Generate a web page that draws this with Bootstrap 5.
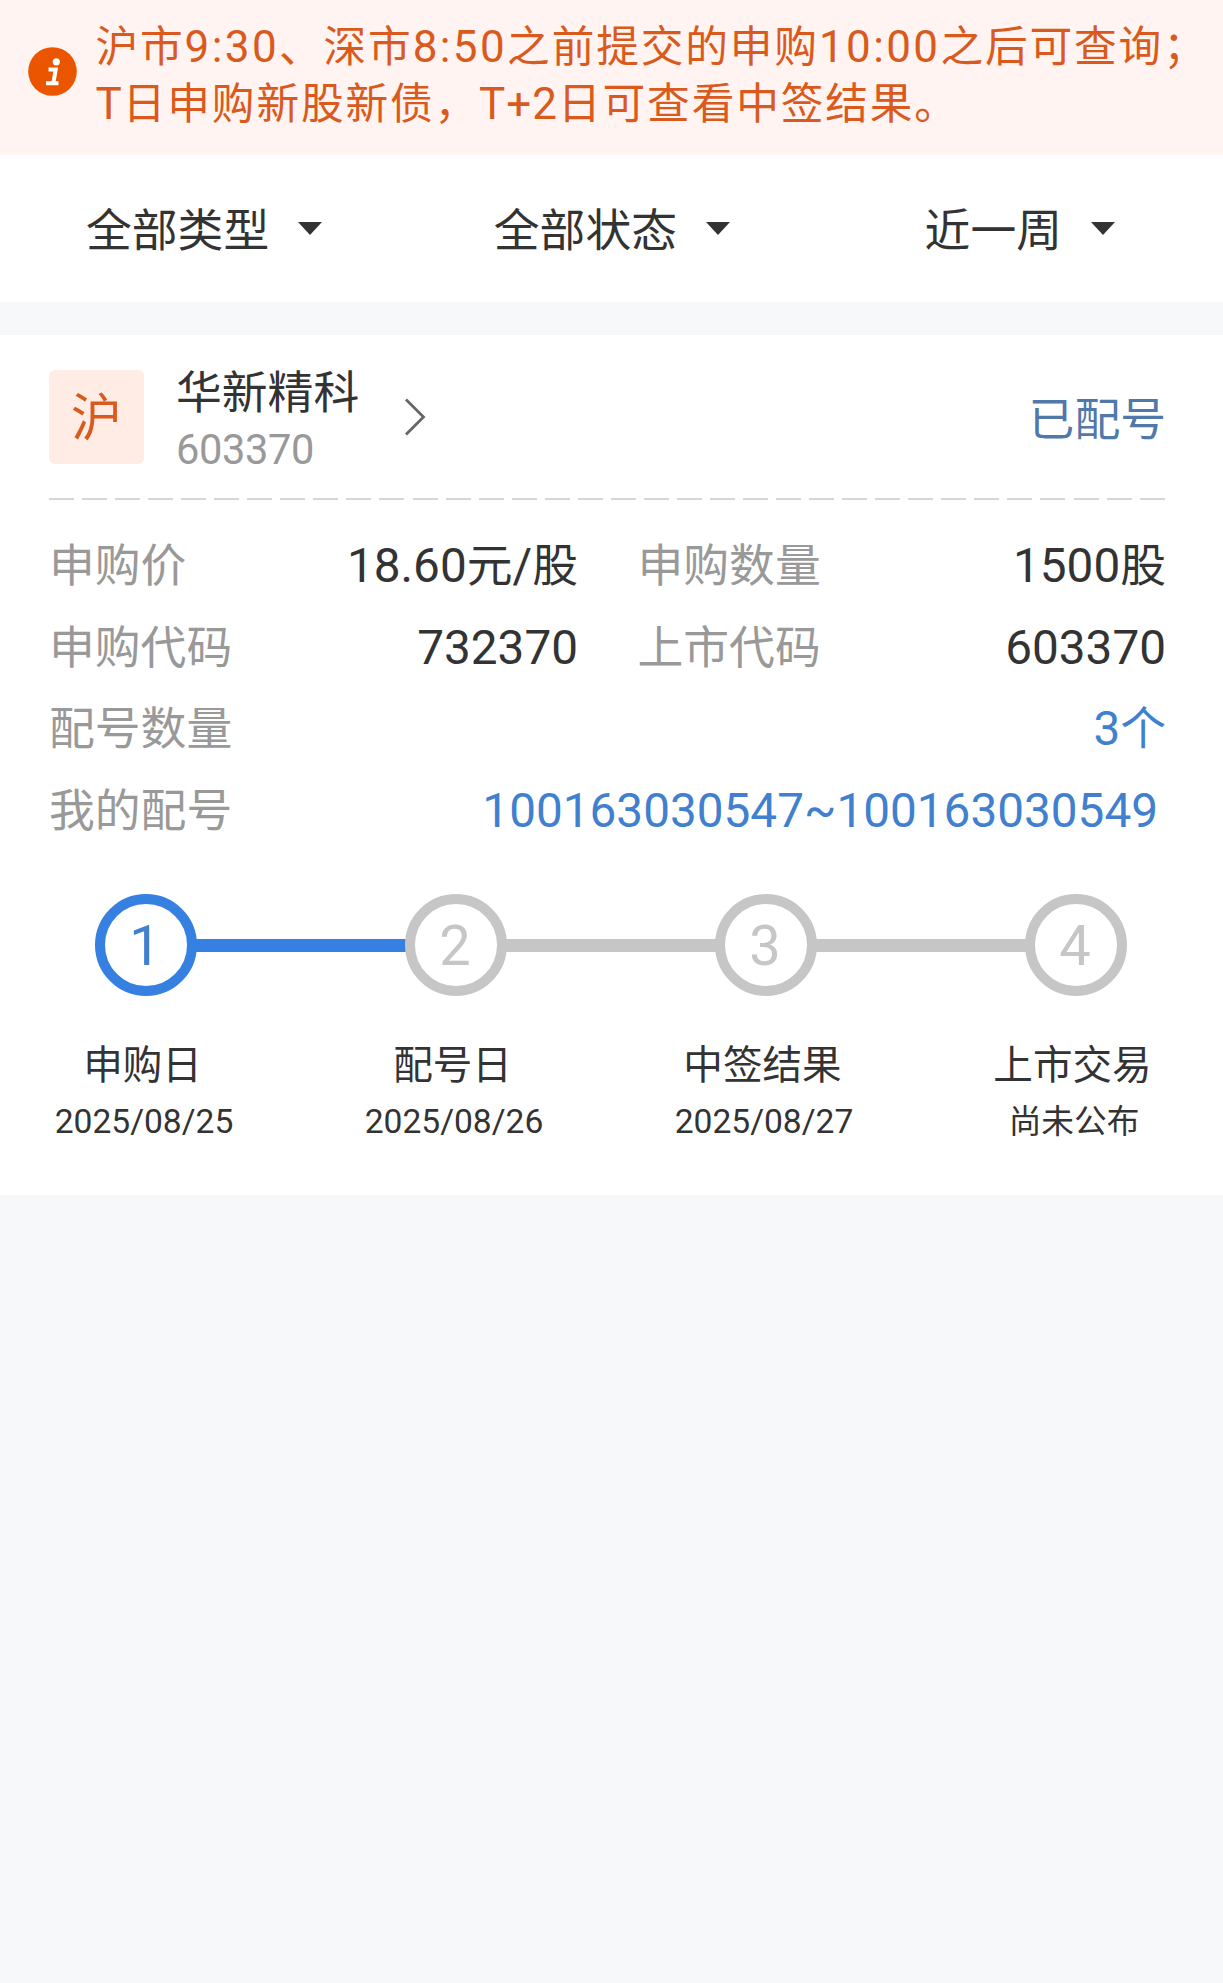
<!DOCTYPE html>
<html lang="zh-CN">
<head>
<meta charset="utf-8">
<meta name="viewport" content="width=device-width, initial-scale=1">
<title>新股申购查询</title>
<link href="https://cdn.jsdelivr.net/npm/bootstrap@5.3.0/dist/css/bootstrap.min.css" rel="stylesheet">
<style>
body{background:#f7f8fa;color:#333;font-family:"Noto Sans CJK SC",sans-serif;font-size:45.8px;line-height:1;white-space:nowrap;overflow-x:hidden}
.num{font-family:Roboto,"Noto Sans CJK SC",sans-serif;font-size:47.7px;line-height:1}
.notice{height:155px;background:#fff4f1;color:#d95a1c;padding:15px 0 0 28px}
.notice-icon{width:49px;height:49px;margin-top:32px}
.notice-text{font-size:42.7px;line-height:57px;margin-left:18.5px;letter-spacing:1.85px}
.notice-text .num{font-size:44px;letter-spacing:2.4px}
.notice-text .trade-day{letter-spacing:1px}
.filters{height:147px;padding:0 108px 4px 86px}
.filters button{background:none;border:0;padding:0;color:#333;line-height:60px}
.filters .mid{margin-right:23px}
.caret{width:24px;height:13px;margin:4px 0 0 29px}
.order{margin-top:33px;height:860px;padding:0 57px 0 49px}
.order-head{height:163px;padding-top:35px}
.market{width:95px;height:94px;background:#feece5;color:#d95a1c;border-radius:6px;font-size:51px;line-height:89px}
.stock{margin-left:32px;height:94px}
.stock-name{line-height:44px;height:61px;margin-top:-3px}
.stock-code{font-family:Roboto,sans-serif;font-size:41.6px;letter-spacing:-.4px;line-height:43px;color:#999}
.arrow{width:22px;height:38px;margin-left:45px}
.state{color:#5078ab;font-size:45.8px}
.rule{height:2px;background:repeating-linear-gradient(90deg,#d6d6d6 0 25px,transparent 25px 33.05px)}
.facts{padding-top:22px}
.fact{height:81.5px;line-height:81.5px}
.fact .key{color:#999}
.fact-l{width:529px}
.fact-r{width:528.5px}
.link-num{color:#4080cf}
.track{padding:45.500px 0 0 46px}
.dot{width:102px;height:102px;border:10px solid #c6c6c6;border-radius:50%;color:#c6c6c6;font-family:Roboto,sans-serif;font-size:56px;line-height:84px;padding-right:2px;flex:none}
.dot.on{border-color:#3580e0;color:#4080cf}
.bar{width:210px;height:13px;background:#c6c6c6;margin:2px -1px 0}
.bar.on{background:#3580e0}
.labels{gap:70px;margin:36.500px -57px 0 -25px}
.labels>div{width:240px;flex:none}
.step-name{font-size:39.6px;line-height:60px;margin-right:3px}
.step-date{font-size:32.7px;line-height:53px}
.step-date .num{font-size:33.6px}
</style>
</head>
<body>
<header class="notice d-flex align-items-start">
  <svg class="notice-icon flex-shrink-0" viewBox="0 0 49 49"><circle cx="24.500" cy="24.500" r="24.300" fill="#eb5500"/><circle cx="28.300" cy="14.800" r="3.600" fill="#fff"/><path d="M20.500 22.500h7.200l-2.300 13.300M18 36.300h12.500" fill="none" stroke="#fff" stroke-width="4"/></svg>
  <div class="notice-text"><div>沪市<span class="num">9:30</span>、深市<span class="num">8:50</span>之前提交的申购<span class="num">10:00</span>之后可查询；</div><div><span class="num trade-day">T</span>日申购新股新债，<span class="num trade-day">T+2</span>日可查看中签结果。</div></div>
</header>
<nav class="filters bg-white d-flex justify-content-between align-items-center">
  <button class="d-flex align-items-center">全部类型<svg class="caret" viewBox="0 0 24 13"><path d="M0 0h24L12 13z" fill="#333"/></svg></button>
  <button class="mid d-flex align-items-center">全部状态<svg class="caret" viewBox="0 0 24 13"><path d="M0 0h24L12 13z" fill="#333"/></svg></button>
  <button class="d-flex align-items-center">近一周<svg class="caret" viewBox="0 0 24 13"><path d="M0 0h24L12 13z" fill="#333"/></svg></button>
</nav>
<main class="order bg-white">
  <div class="order-head d-flex align-items-start">
    <div class="market text-center">沪</div>
    <div class="stock"><div class="stock-name">华新精科</div><div class="stock-code">603370</div></div>
    <div class="d-flex align-items-center flex-grow-1 stock ms-0">
      <svg class="arrow" viewBox="0 0 22 38"><path d="M2 1.500l17.500 17.500L2 36.500" fill="none" stroke="#666" stroke-width="2.800"/></svg>
      <span class="state ms-auto">已配号</span>
    </div>
  </div>
  <div class="rule"></div>
  <div class="facts">
    <div class="d-flex justify-content-between"><div class="fact fact-l d-flex justify-content-between align-items-baseline"><span class="key">申购价</span><span><span class="num">18.60</span>元<span class="num">/</span>股</span></div><div class="fact fact-r d-flex justify-content-between align-items-baseline"><span class="key">申购数量</span><span><span class="num">1500</span>股</span></div></div>
    <div class="d-flex justify-content-between"><div class="fact fact-l d-flex justify-content-between align-items-baseline"><span class="key">申购代码</span><span class="num">732370</span></div><div class="fact fact-r d-flex justify-content-between align-items-baseline"><span class="key">上市代码</span><span class="num">603370</span></div></div>
    <div class="fact d-flex justify-content-between align-items-baseline"><span class="key">配号数量</span><span class="link-num"><span class="num">3</span>个</span></div>
    <div class="fact d-flex justify-content-between align-items-baseline"><span class="key">我的配号</span><span class="link-num num pe-2">100163030547~100163030549</span></div>
  </div>
  <div class="track d-flex align-items-center">
    <div class="dot on text-center">1</div><div class="bar on"></div><div class="dot text-center">2</div><div class="bar"></div><div class="dot text-center">3</div><div class="bar"></div><div class="dot text-center">4</div>
  </div>
  <div class="labels d-flex text-center">
    <div><div class="step-name">申购日</div><div class="step-date"><span class="num">2025/08/25</span></div></div>
    <div><div class="step-name">配号日</div><div class="step-date"><span class="num">2025/08/26</span></div></div>
    <div><div class="step-name">中签结果</div><div class="step-date"><span class="num">2025/08/27</span></div></div>
    <div><div class="step-name">上市交易</div><div class="step-date">尚未公布</div></div>
  </div>
</main>
<script src="https://cdn.jsdelivr.net/npm/bootstrap@5.3.0/dist/js/bootstrap.bundle.min.js"></script>
</body>
</html>
